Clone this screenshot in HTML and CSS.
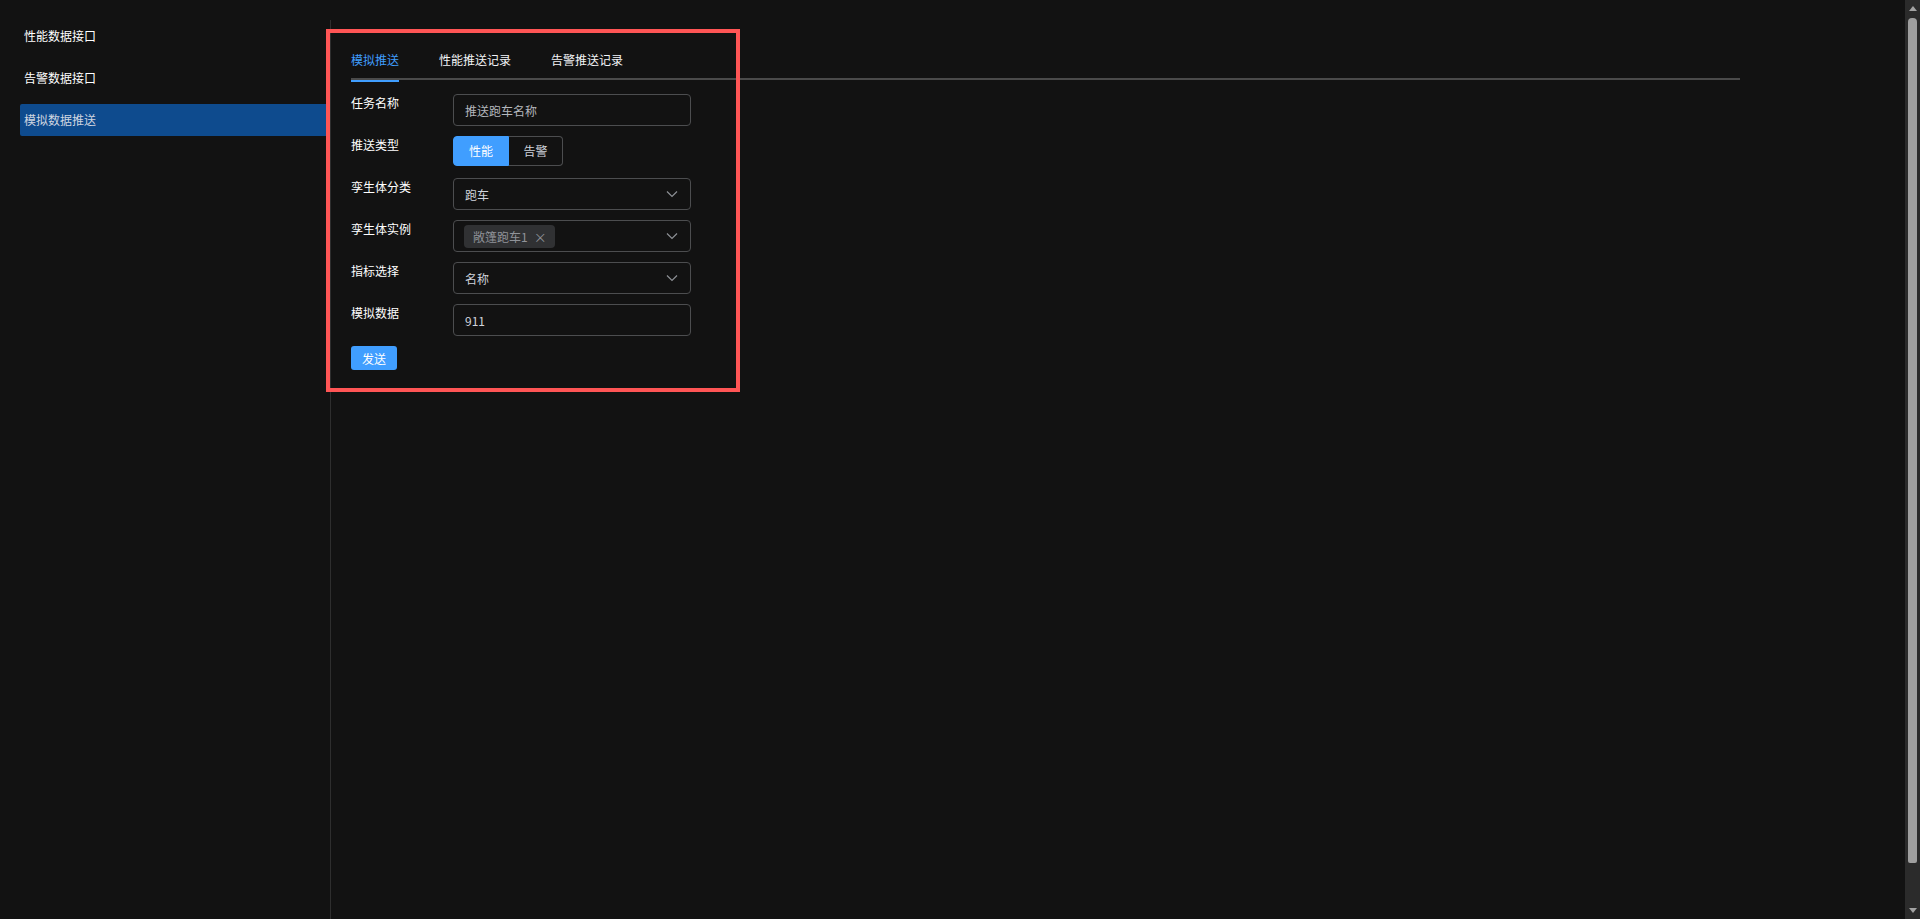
FILE: index.html
```html
<!DOCTYPE html>
<html lang="zh-CN">
<head>
<meta charset="utf-8">
<title>模拟数据推送</title>
<link rel="stylesheet" href="styles.css">
</head>
<body>
<div class="layout">
  <aside class="sidebar">
    <div class="menu-item">性能数据接口</div>
    <div class="menu-item">告警数据接口</div>
    <div class="menu-item active">模拟数据推送</div>
  </aside>
  <main class="main">
    <div class="tabs">
      <div class="tab active">模拟推送</div>
      <div class="tab">性能推送记录</div>
      <div class="tab">告警推送记录</div>
    </div>
    <form class="form">
      <div class="row">
        <label class="label">任务名称</label>
        <div class="control input"><span class="placeholder">推送跑车名称</span></div>
      </div>
      <div class="row">
        <label class="label">推送类型</label>
        <div class="radio-group">
          <span class="radio on">性能</span><span class="radio">告警</span>
        </div>
      </div>
      <div class="row">
        <label class="label">孪生体分类</label>
        <div class="control select"><span class="value">跑车</span>
          <svg class="chev" width="12" height="8" viewBox="0 0 12 8"><path d="M1 1.5 L6 6.5 L11 1.5" fill="none" stroke="#8d9095" stroke-width="1.2"/></svg>
        </div>
      </div>
      <div class="row">
        <label class="label">孪生体实例</label>
        <div class="control select tags"><span class="tag">敞篷跑车1<span class="tag-x">×</span></span>
          <svg class="chev" width="12" height="8" viewBox="0 0 12 8"><path d="M1 1.5 L6 6.5 L11 1.5" fill="none" stroke="#8d9095" stroke-width="1.2"/></svg>
        </div>
      </div>
      <div class="row">
        <label class="label">指标选择</label>
        <div class="control select"><span class="value">名称</span>
          <svg class="chev" width="12" height="8" viewBox="0 0 12 8"><path d="M1 1.5 L6 6.5 L11 1.5" fill="none" stroke="#8d9095" stroke-width="1.2"/></svg>
        </div>
      </div>
      <div class="row">
        <label class="label">模拟数据</label>
        <div class="control input"><span class="value">911</span></div>
      </div>
      <div class="actions">
        <button type="button" class="btn">发送</button>
      </div>
    </form>
  </main>
</div>
<div class="highlight-box"></div>
<div class="scrollbar">
  <span class="arrow up"></span>
  <span class="thumb"></span>
  <span class="arrow down"></span>
</div>
</body>
</html>
```
FILE: styles.css
```css
html {
  background: #121212;
}
body {
  margin: 0;
  background: #121212;
  color: #e5eaf3;
  font-family: "Noto Sans CJK SC", "Noto Sans", "Liberation Sans", sans-serif;
  font-size: 12px;
  overflow: hidden;
}
.layout {
  display: flex;
  padding-top: 20px;
  height: 100vh;
  box-sizing: border-box;
  padding-right: 15px;
}
.sidebar {
  width: 310px;
  padding-left: 20px;
  border-right: 1px solid #2e2e2e;
  flex-shrink: 0;
}
.menu-item {
  height: 32px;
  line-height: 32px;
  padding-left: 4px;
  margin-bottom: 10px;
  color: #ffffff;
  border-radius: 2px 0 0 2px;
}
.menu-item.active {
  background: #0e4b8e;
  color: #d0d6e0;
}
.main {
  flex: 1;
  padding-left: 20px;
  padding-top: 20px;
}
.tabs {
  display: flex;
  width: 1389px;
  height: 40px;
  border-bottom: 2px solid #4a4a4a;
  box-sizing: border-box;
}
.tab {
  height: 40px;
  line-height: 40px;
  padding: 0 20px;
  color: #f2f4f7;
  box-sizing: border-box;
}
.tab:first-child {
  padding-left: 0;
}
.tab.active {
  color: #409eff;
  position: relative;
}
.tab.active::after {
  content: "";
  position: absolute;
  left: 0;
  right: 20px;
  bottom: -2px;
  height: 2px;
  background: #409eff;
}
.form {
  margin-top: 14px;
}
.row {
  display: flex;
  align-items: flex-start;
  margin-bottom: 10px;
}
.label {
  width: 102px;
  flex-shrink: 0;
  line-height: 18px;
  color: #ffffff;
}
.control {
  width: 238px;
  height: 32px;
  box-sizing: border-box;
  border: 1px solid #4c4d4f;
  border-radius: 4px;
  display: flex;
  align-items: center;
  padding: 0 11px;
}
.placeholder {
  color: #b4b7bd;
}
.value {
  color: #cfd3dc;
}
.select {
  justify-content: space-between;
}
.chev {
  margin-right: 1px;
}
.tags {
  padding-left: 10px;
}
.tag {
  height: 23px;
  line-height: 23px;
  background: #303133;
  color: #909399;
  border-radius: 4px;
  padding: 0 8px 0 9px;
  display: inline-flex;
  align-items: center;
}
.tag-x {
  margin-left: 6px;
  font-size: 13px;
  color: #8d9095;
}
.radio-group {
  display: flex;
  align-items: flex-start;
  height: 32px;
}
.radio {
  height: 30px;
  line-height: 28px;
  box-sizing: border-box;
  text-align: center;
  border: 1px solid #4c4d4f;
  color: #cfd3dc;
}
.radio.on {
  width: 56px;
  background: #409eff;
  border-color: #409eff;
  color: #ffffff;
  border-radius: 4px 0 0 4px;
}
.radio:not(.on) {
  width: 54px;
  border-left: none;
  border-radius: 0 4px 4px 0;
}
.actions {
  display: flex;
}
.btn {
  height: 24px;
  width: 46px;
  padding: 0;
  border: none;
  border-radius: 3px;
  background: #409eff;
  color: #ffffff;
  font-family: inherit;
  font-size: 12px;
  cursor: pointer;
}
.highlight-box {
  position: absolute;
  left: 326px;
  top: 29px;
  width: 414px;
  height: 363px;
  box-sizing: border-box;
  border: 4px solid #ff5555;
  pointer-events: none;
}
.scrollbar {
  position: fixed;
  top: 0;
  right: 0;
  width: 15px;
  height: 100vh;
  background: #2b2b2b;
  display: flex;
  flex-direction: column;
  align-items: center;
}
.arrow {
  width: 0;
  height: 0;
  border-left: 4.5px solid transparent;
  border-right: 4.5px solid transparent;
}
.arrow.up {
  margin-top: 6px;
  border-bottom: 5px solid #a3a3a3;
}
.arrow.down {
  margin-bottom: 6px;
  border-top: 5px solid #a3a3a3;
}
.thumb {
  width: 9px;
  flex: 1;
  margin: 7px 0 45px;
  background: #9f9f9f;
  border-radius: 4px 4px 2px 2px;
}
```
